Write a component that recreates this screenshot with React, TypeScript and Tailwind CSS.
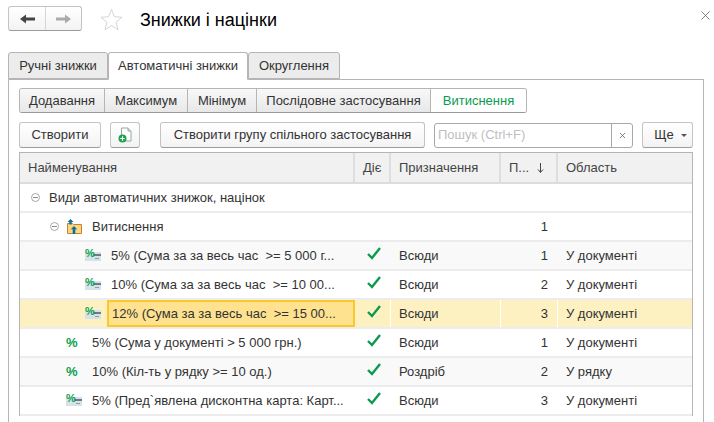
import { X } from 'lucide-react';

const font = 'font-["Liberation_Sans",Arial,sans-serif]';

type Row = {
  name: string;
  indent: number;
  icon: 'group' | 'folder' | 'card' | 'percent';
  on?: boolean;
  target?: string;
  order: string;
  area?: string;
  stripe?: boolean;
  selected?: boolean;
};

const rows: Row[] = [
  { name: 'Види автоматичних знижок, націнок', indent: 11, icon: 'group', order: '' },
  { name: 'Витиснення', indent: 30, icon: 'folder', order: '1' },
  { name: '5% (Сума за за весь час  >= 5 000 г...', indent: 65, icon: 'card', on: true, target: 'Всюди', order: '1', area: 'У документі', stripe: true },
  { name: '10% (Сума за за весь час  >= 10 00...', indent: 65, icon: 'card', on: true, target: 'Всюди', order: '2', area: 'У документі' },
  { name: '12% (Сума за за весь час  >= 15 00...', indent: 65, icon: 'card', on: true, target: 'Всюди', order: '3', area: 'У документі', selected: true },
  { name: '5% (Сума у документі > 5 000 грн.)', indent: 46, icon: 'percent', on: true, target: 'Всюди', order: '1', area: 'У документі' },
  { name: '10% (Кіл-ть у рядку >= 10 од.)', indent: 46, icon: 'percent', on: true, target: 'Роздріб', order: '2', area: 'У рядку', stripe: true },
  { name: '5% (Пред`явлена дисконтна карта: Карт...', indent: 46, icon: 'card', on: true, target: 'Всюди', order: '3', area: 'У документі' },
];

function Star() {
  return (
    <svg width="23" height="23" viewBox="0 0 24 24" fill="none" stroke="#cfd4d8" strokeWidth="1">
      <path d="M12 1.500l3 7.600 8 .6-6.200 5.100 2 8-6.800-4.400-6.800 4.400 2-8L1 9.700l8-.6z" />
    </svg>
  );
}

function NavArrow({ color, flip }: { color: string; flip?: boolean }) {
  return (
    <svg width="15" height="10" viewBox="0 0 15 10" fill={color} className={flip ? 'rotate-180' : ''}>
      <path d="M0 5l6-4.500V3.500h9v3H6v3z" />
    </svg>
  );
}

function CollapseMark() {
  return (
    <span className="flex h-[9px] w-[9px] shrink-0 items-center justify-center rounded-full border border-[#a8a8a8]">
      <span className="h-px w-[5px] bg-[#8a8a8a]" />
    </span>
  );
}

function CardIcon() {
  return (
    <span className="relative block h-[12px] w-[16px] shrink-0">
      <span className="absolute top-[3px] left-0 h-[9px] w-[16px] bg-[#d5e3e8]" />
      <span className="absolute top-[5px] right-0 h-[2px] w-[8px] bg-[#6f7b80]" />
      <span className="absolute top-[9px] right-[2px] h-px w-[4px] bg-[#8f9ba0]" />
      <span className="absolute top-[-1px] left-0 text-[11px] leading-none font-bold text-[#0ba14f]">%</span>
    </span>
  );
}

function FolderIcon() {
  return (
    <svg width="15" height="15" viewBox="0 0 15 15" className="shrink-0">
      <path d="M.5 4.500h5l1 1h8v9H.5z" fill="#fdd77f" stroke="#c9822b" />
      <path d="M3.500 0l3 3H4.700v2.500H2.300V3H.5z" fill="#0d6f9e" />
      <path d="M7 7l3.200 3.300H8.300V15H5.700v-4.700H3.800z" fill="#0d6f9e" />
    </svg>
  );
}

function Check() {
  return (
    <svg width="14" height="13" viewBox="0 0 14 13" fill="none" stroke="#0b9a4e" strokeWidth="2.400">
      <path d="M1 7l4 4L13 1" />
    </svg>
  );
}

function TableRow({ row }: { row: Row }) {
  const bg = row.selected ? 'bg-[#fdf1c2]' : row.stripe ? 'bg-[#f9f9f9]' : 'bg-white';
  const divider = row.selected ? 'border-white' : 'border-transparent';
  const isLeaf = row.icon === 'card' || row.icon === 'percent';
  return (
    <div className={`flex h-[29px] border-b-2 border-[#ececec] text-[13px] leading-[15px] text-[#333] ${bg}`}>
      <div className="flex w-[335px] shrink-0 overflow-hidden" style={{ paddingLeft: row.indent }}>
        {row.icon === 'group' && (
          <div className="flex items-center">
            <CollapseMark />
            <span className="ml-[9px]">{row.name}</span>
          </div>
        )}
        {row.icon === 'folder' && (
          <div className="flex items-center">
            <CollapseMark />
            <span className="ml-[8px]"><FolderIcon /></span>
            <span className="ml-[10px]">{row.name}</span>
          </div>
        )}
        {isLeaf && (
          <div className="w-[16px] shrink-0 pt-[7px]">
            {row.icon === 'card' ? (
              <CardIcon />
            ) : (
              <span className="block text-[13px] leading-none font-bold text-[#0ba14f]">%</span>
            )}
          </div>
        )}
        {isLeaf && row.selected && (
          <div className="ml-[6px] flex h-[27px] min-w-0 flex-1 items-center border-2 border-[#fcc62d] bg-[#fee28f] pl-[3px]">
            <span className="whitespace-pre">{row.name}</span>
          </div>
        )}
        {isLeaf && !row.selected && (
          <div className="ml-[10px] flex min-w-0 flex-1 items-center">
            <span className="whitespace-pre">{row.name}</span>
          </div>
        )}
      </div>
      <div className={`flex w-[36px] shrink-0 justify-center border-r pt-[5px] pl-[2px] ${divider}`}>
        {row.on && <Check />}
      </div>
      <div className={`flex w-[110px] shrink-0 items-center border-r pl-[8px] ${divider}`}>{row.target}</div>
      <div className={`flex w-[57px] shrink-0 items-center justify-end border-r pr-[9px] ${divider}`}>{row.order}</div>
      <div className="flex min-w-0 flex-1 items-center pl-[8px]">{row.area}</div>
    </div>
  );
}

function Tab({ label, active, width }: { label: string; active?: boolean; width: string }) {
  return (
    <div
      className={`flex items-center justify-center rounded-t-[3px] border border-[#b5b5b5] text-[13px] text-[#333] ${width} ${
        active ? 'z-10 -mb-px h-[28px] border-b-white bg-white' : 'h-[27px] bg-[#ececec]'
      }`}
    >
      {label}
    </div>
  );
}

function Segment({ label, width, green }: { label: string; width: string; green?: boolean }) {
  return (
    <div
      className={`flex h-full items-center justify-center border-r border-[#b5b5b5] last:border-r-0 ${width} ${
        green ? 'bg-white text-[#0a9a50]' : 'bg-gradient-to-b from-[#f8f8f8] to-[#e8e8e8] text-[#333]'
      }`}
    >
      {label}
    </div>
  );
}

function Btn({ children, width }: { children: React.ReactNode; width: string }) {
  return (
    <div
      className={`flex h-[26px] shrink-0 items-center justify-center rounded-[3px] border border-[#c4c4c4] border-b-[#9c9c9c] bg-gradient-to-b from-white to-[#f3f3f3] text-[13px] text-[#333] ${width}`}
    >
      {children}
    </div>
  );
}

export default function App() {
  return (
    <div className={`h-[422px] w-[714px] overflow-hidden bg-white ${font}`}>
      <div className="flex h-[52px] items-start pt-[6px] pl-[8px]">
        <div className="flex h-[25px] w-[74px] items-center rounded-[3px] border border-[#c4c4c4] border-b-[#9c9c9c] bg-gradient-to-b from-white to-[#f3f3f3]">
          <div className="flex h-full w-[37px] items-center justify-center border-r border-[#d6d6d6]">
            <NavArrow color="#444" />
          </div>
          <div className="flex flex-1 items-center justify-center">
            <NavArrow color="#aaa" flip />
          </div>
        </div>
        <div className="mt-[2px] ml-[18px]">
          <Star />
        </div>
        <div className="mt-[2px] ml-[17px] flex-1 text-[18px] leading-[24px] text-black">Знижки і націнки</div>
        <X size={15} strokeWidth={1.200} className="mt-[2px] mr-[1px] text-[#555]" />
      </div>

      <div className="flex pl-[8px]">
        <Tab label="Ручні знижки" width="w-[100px]" />
        <Tab label="Автоматичні знижки" active width="w-[140px]" />
        <Tab label="Округлення" width="w-[92px]" />
      </div>

      <div className="mr-[10px] ml-[8px] h-[344px] border border-b-0 border-[#b5b5b5] px-[10px] pt-[8px]">
        <div className="flex h-[25px] w-[508px] overflow-hidden rounded-[3px] border border-[#b5b5b5] border-b-[#999] text-[13px]">
          <Segment label="Додавання" width="w-[85px]" />
          <Segment label="Максимум" width="w-[83px]" />
          <Segment label="Мінімум" width="w-[69px]" />
          <Segment label="Послідовне застосування" width="w-[174px]" />
          <Segment label="Витиснення" width="flex-1" green />
        </div>

        <div className="mt-[9px] flex h-[26px] items-center">
          <Btn width="w-[82px]">Створити</Btn>
          <Btn width="ml-[9px] w-[30px]">
            <svg width="14" height="16" viewBox="0 0 14 16">
              <path d="M3.500 1H10l3 3v10H3.500z" fill="#fff" stroke="#9aa5a9" />
              <path d="M10 1v3h3" fill="#dfe6e8" stroke="#9aa5a9" />
              <circle cx="4.500" cy="11.500" r="4" fill="#1ba34f" />
              <path d="M4.500 9.300v4.400M2.300 11.500h4.400" stroke="#fff" strokeWidth="1.200" />
            </svg>
          </Btn>
          <Btn width="ml-[20px] w-[265px]">Створити групу спільного застосування</Btn>
          <div className="ml-[9px] flex h-[25px] w-[199px] items-center rounded-[3px] border border-[#a8a8a8]">
            <span className="flex-1 pl-[3px] text-[13px] text-[#c0c0c0]">Пошук (Ctrl+F)</span>
            <span className="flex h-full w-[21px] items-center justify-center border-l border-[#a8a8a8]">
              <X size={9} strokeWidth={2} className="text-[#555]" />
            </span>
          </div>
          <Btn width="ml-[9px] w-[51px]">
            <span className="ml-[6px]">Ще</span>
            <span className="ml-[7px] h-0 w-0 border-x-[3px] border-t-[3px] border-x-transparent border-t-[#555]" />
          </Btn>
        </div>

        <div className="mt-[4px] border border-b-0 border-[#b5b5b5]">
          <div className="flex h-[31px] border-b-2 border-[#dcdcdc] bg-[#f1f1f1] text-[13px] text-[#444]">
            <div className="flex w-[335px] items-center border-r-2 border-[#dedede] pl-[8px]">Найменування</div>
            <div className="flex w-[36px] items-center border-r-2 border-[#dedede] pl-[8px]">Діє</div>
            <div className="flex w-[110px] items-center border-r-2 border-[#dedede] pl-[8px]">Призначення</div>
            <div className="flex w-[57px] items-center border-r-2 border-[#dedede] pl-[8px]">
              П...
              <svg width="7" height="10" viewBox="0 0 7 10" fill="none" stroke="#444" className="ml-[8px]">
                <path d="M3.500 0v9M1 6.500l2.500 3 2.500-3" />
              </svg>
            </div>
            <div className="flex flex-1 items-center pl-[8px]">Область</div>
          </div>
          {rows.map((row) => (
            <TableRow key={row.name} row={row} />
          ))}
        </div>
      </div>
    </div>
  );
}
